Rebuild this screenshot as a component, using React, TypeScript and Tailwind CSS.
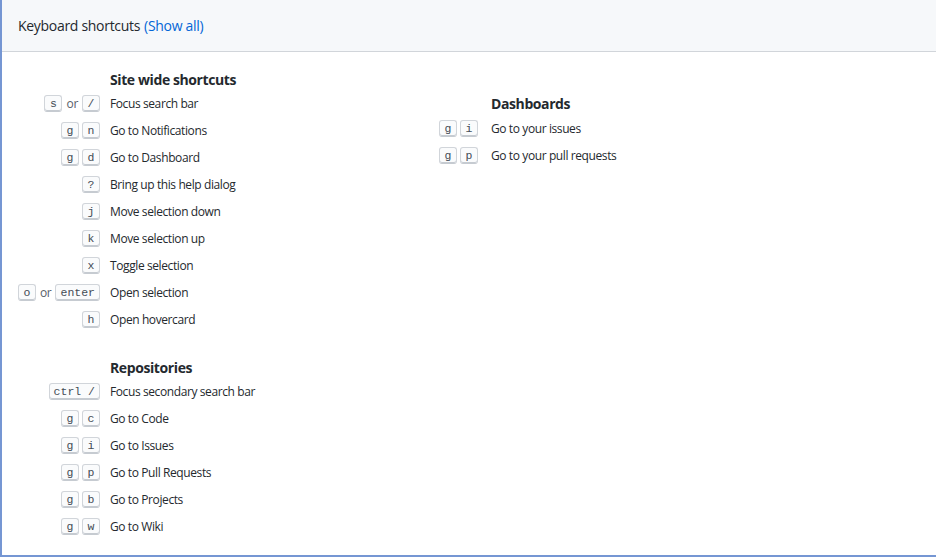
const font = { fontFamily: '"Open Sans", "Liberation Sans", sans-serif' };

type Row = { keys: string[][]; label: string };

const siteWide: Row[] = [
  { keys: [["s"], ["/"]], label: "Focus search bar" },
  { keys: [["g", "n"]], label: "Go to Notifications" },
  { keys: [["g", "d"]], label: "Go to Dashboard" },
  { keys: [["?"]], label: "Bring up this help dialog" },
  { keys: [["j"]], label: "Move selection down" },
  { keys: [["k"]], label: "Move selection up" },
  { keys: [["x"]], label: "Toggle selection" },
  { keys: [["o"], ["enter"]], label: "Open selection" },
  { keys: [["h"]], label: "Open hovercard" },
];

const repositories: Row[] = [
  { keys: [["ctrl /"]], label: "Focus secondary search bar" },
  { keys: [["g", "c"]], label: "Go to Code" },
  { keys: [["g", "i"]], label: "Go to Issues" },
  { keys: [["g", "p"]], label: "Go to Pull Requests" },
  { keys: [["g", "b"]], label: "Go to Projects" },
  { keys: [["g", "w"]], label: "Go to Wiki" },
];

const dashboards: Row[] = [
  { keys: [["g", "i"]], label: "Go to your issues" },
  { keys: [["g", "p"]], label: "Go to your pull requests" },
];

function Kbd({ k }: { k: string }) {
  return (
    <kbd
      className="flex h-[17px] min-w-[18px] items-center justify-center rounded-[3px] border border-[#d1d5da] border-b-[#c6cbd1] bg-[#fafbfc] px-[4px] pt-[1px] text-[11.5px] leading-none text-[#444d56] shadow-[inset_0_-1px_0_#c6cbd1]"
      style={{ fontFamily: '"Liberation Mono", "DejaVu Sans Mono", monospace' }}
    >
      {k}
    </kbd>
  );
}

function ShortcutRow({ row, keyWidth, gap }: { row: Row; keyWidth: string; gap: string }) {
  return (
    <div className="flex h-[27px] items-center">
      <div className={`flex ${keyWidth} ${gap} items-center justify-end`}>
        {row.keys.map((group, i) => (
          <div key={i} className="flex items-center">
            {i > 0 && <span className="mx-[4px] text-[12px] tracking-[-0.3px] text-[#586069]">or</span>}
            <div className="flex gap-[3px]">
              {group.map((k) => (
                <Kbd key={k} k={k} />
              ))}
            </div>
          </div>
        ))}
      </div>
      <span className="text-[12px] tracking-[-0.4px] text-[#24292e]">{row.label}</span>
    </div>
  );
}

export default function App() {
  return (
    <div className="h-[558px] w-[936px] bg-white" style={font}>
      <div className="h-[557px] border-b-2 border-l-2 border-[#7596d3]">
        {/* Header */}
        <div className="flex h-[52px] items-center border-b border-[#d1d5da] bg-[#f6f8fa] pl-[16px] text-[14px] tracking-[-0.3px] text-[#24292e]">
          Keyboard shortcuts
          <a className="ml-[4px] text-[#0366d6]">(Show all)</a>
        </div>

        <div className="flex pl-[16px]">
          {/* Left column */}
          <div className="w-[419px] pt-[18px]">
            <h2 className="ml-[92px] h-[20px] text-[14px] font-bold leading-[20px] tracking-[-0.4px] text-[#24292e]">
              Site wide shortcuts
            </h2>
            {siteWide.map((r) => (
              <ShortcutRow key={r.label} row={r} keyWidth="w-[82px]" gap="mr-[10px]" />
            ))}
            <h2 className="ml-[92px] mt-[25px] h-[20px] text-[14px] font-bold leading-[20px] tracking-[-0.4px] text-[#24292e]">
              Repositories
            </h2>
            {repositories.map((r) => (
              <ShortcutRow key={r.label} row={r} keyWidth="w-[82px]" gap="mr-[10px]" />
            ))}
          </div>

          {/* Right column */}
          <div className="pt-[42px]">
            <h2 className="mb-[1px] ml-[54px] h-[20px] text-[14px] font-bold leading-[20px] tracking-[-0.4px] text-[#24292e]">
              Dashboards
            </h2>
            {dashboards.map((r) => (
              <ShortcutRow key={r.label} row={r} keyWidth="w-[41px]" gap="mr-[13px]" />
            ))}
          </div>
        </div>
      </div>
    </div>
  );
}
